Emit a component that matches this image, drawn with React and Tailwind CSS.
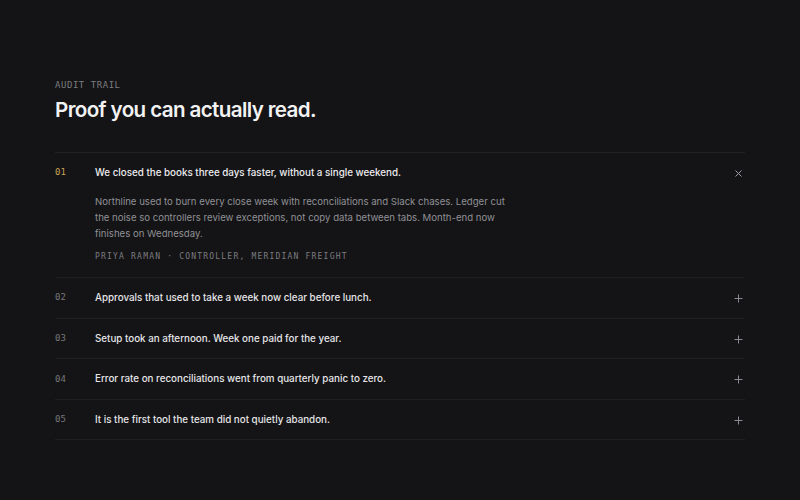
import React from "react";

const rows = [
  { n: "02", q: "Approvals that used to take a week now clear before lunch.", h: "h-[41px]" },
  { n: "03", q: "Setup took an afternoon. Week one paid for the year.", h: "h-[40px] pt-[1px]" },
  { n: "04", q: "Error rate on reconciliations went from quarterly panic to zero.", h: "h-[41px] pt-[1px]" },
  { n: "05", q: "It is the first tool the team did not quietly abandon.", h: "h-[40px] pt-[1px]" },
];

const sans = { fontFamily: "Inter, 'Noto Sans', sans-serif" };
const mono = { fontFamily: "'DejaVu Sans Mono', 'Liberation Mono', monospace" };

function Plus() {
  return (
    <svg width="9" height="9" viewBox="0 0 9 9" className="text-[#8a8a8e]">
      <path d="M4.5 0.5v8M0.5 4.5h8" stroke="currentColor" strokeWidth="1" />
    </svg>
  );
}

function Cross() {
  return (
    <svg width="7" height="7" viewBox="0 0 7 7" className="text-[#a0a0a4]">
      <path d="M0.5 0.5l6 6M6.5 0.5l-6 6" stroke="currentColor" strokeWidth="1" />
    </svg>
  );
}

export default function App() {
  return (
    <div className="w-[800px] h-[500px] bg-[#141416] overflow-hidden" style={sans}>
      <div className="px-[55px] pt-[80px]">
        <div className="text-[9px] leading-[10px] tracking-[0.06em] text-[#7c7c80]" style={mono}>
          AUDIT TRAIL
        </div>
        <h1 className="mt-[5px] text-[20.6px] leading-[30px] font-semibold tracking-[-0.03em] text-[#f2f2f3]">
          Proof you can actually read.
        </h1>
        <div className="mt-[27px] border-t border-[#222225]">
          <div className="border-b border-[#1f1f22] pb-[14px]">
            <div className="flex items-center h-[40px]">
              <span className="w-[40px] text-[9px] text-[#c9a253]" style={mono}>01</span>
              <span className="flex-1 text-[9.8px] font-medium text-[#ececee]">
                We closed the books three days faster, without a single weekend.
              </span>
              <span className="w-[14px] flex justify-center"><Cross /></span>
            </div>
            <div className="pl-[40px] mt-[1px]">
              <p className="w-[415px] text-[9.6px] leading-[16px] text-[#909095]">
                Northline used to burn every close week with reconciliations and Slack chases. Ledger cut the noise so controllers review exceptions, not copy data between tabs. Month-end now finishes on Wednesday.
              </p>
              <div className="mt-[9px] text-[8px] leading-[12px] tracking-[0.15em] text-[#7c7c80]" style={mono}>
                PRIYA RAMAN · CONTROLLER, MERIDIAN FREIGHT
              </div>
            </div>
          </div>
          {rows.map((r) => (
            <div key={r.n} className={`flex items-center border-b border-[#1f1f22] ${r.h}`}>
              <span className="w-[40px] text-[9px] text-[#77777b]" style={mono}>{r.n}</span>
              <span className="flex-1 text-[9.8px] font-medium text-[#e6e6e8]">{r.q}</span>
              <span className="w-[14px] flex justify-center"><Plus /></span>
            </div>
          ))}
        </div>
      </div>
    </div>
  );
}
